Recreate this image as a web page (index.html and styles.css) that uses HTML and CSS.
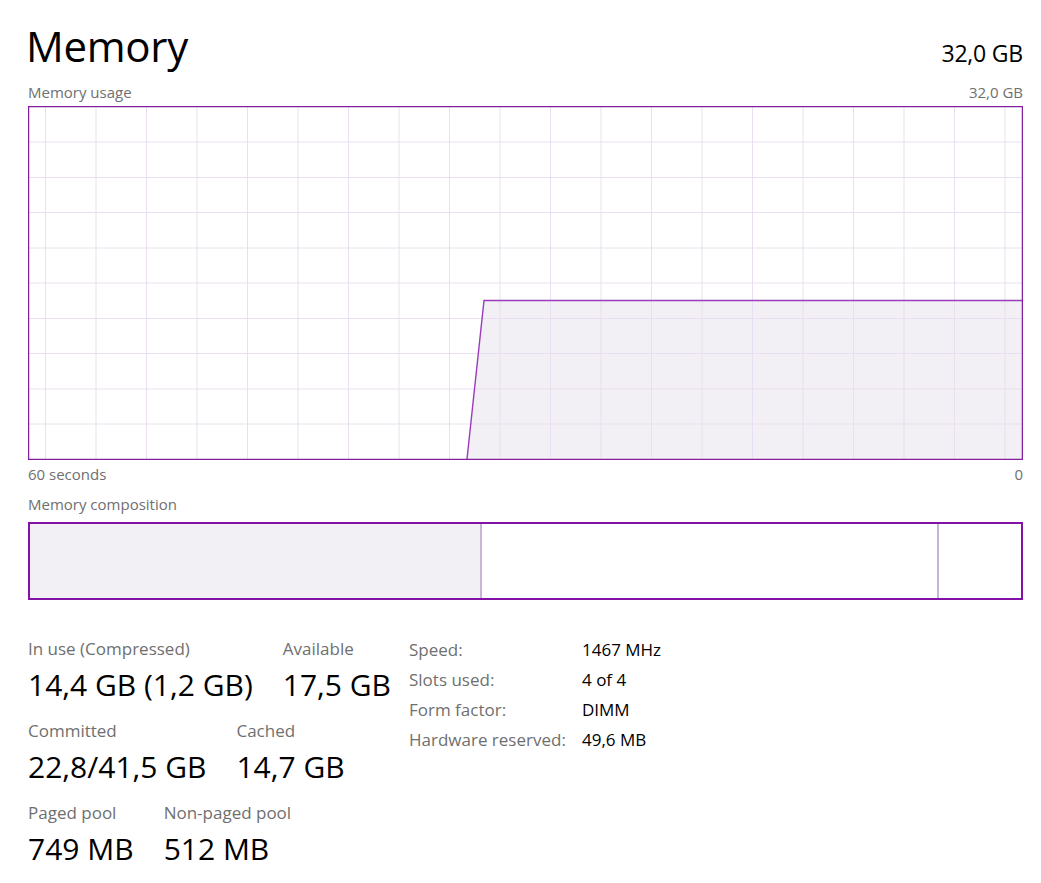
FILE: index.html
```html
<!DOCTYPE html>
<html lang="en">
<head>
<meta charset="utf-8">
<title>Memory</title>
<link rel="stylesheet" href="styles.css">
</head>
<body>
<main class="page">
  <header class="head">
    <h1 class="title">Memory</h1>
    <div class="total">32,0 GB</div>
  </header>

  <div class="caption-row caption-top">
    <span>Memory usage</span>
    <span>32,0 GB</span>
  </div>

  <svg class="chart" width="995" height="354" viewBox="0 0 995 354" xmlns="http://www.w3.org/2000/svg">
    <polygon points="439,353 456,194 994,194 994,353" fill="#f2eff5"/>
    <g stroke="#eadff0" stroke-width="1">
      <line x1="17.5" y1="0" x2="17.5" y2="354"/>
      <line x1="68" y1="0" x2="68" y2="354"/>
      <line x1="118.5" y1="0" x2="118.5" y2="354"/>
      <line x1="169" y1="0" x2="169" y2="354"/>
      <line x1="219.5" y1="0" x2="219.5" y2="354"/>
      <line x1="270" y1="0" x2="270" y2="354"/>
      <line x1="320.5" y1="0" x2="320.5" y2="354"/>
      <line x1="371" y1="0" x2="371" y2="354"/>
      <line x1="421.5" y1="0" x2="421.5" y2="354"/>
      <line x1="472" y1="0" x2="472" y2="354"/>
      <line x1="522.5" y1="0" x2="522.5" y2="354"/>
      <line x1="573" y1="0" x2="573" y2="354"/>
      <line x1="623.5" y1="0" x2="623.5" y2="354"/>
      <line x1="674" y1="0" x2="674" y2="354"/>
      <line x1="724.5" y1="0" x2="724.5" y2="354"/>
      <line x1="775" y1="0" x2="775" y2="354"/>
      <line x1="825.5" y1="0" x2="825.5" y2="354"/>
      <line x1="876" y1="0" x2="876" y2="354"/>
      <line x1="926.5" y1="0" x2="926.5" y2="354"/>
      <line x1="977" y1="0" x2="977" y2="354"/>
      <line x1="0" y1="36" x2="995" y2="36"/>
      <line x1="0" y1="71.5" x2="995" y2="71.5"/>
      <line x1="0" y1="106.5" x2="995" y2="106.5"/>
      <line x1="0" y1="142" x2="995" y2="142"/>
      <line x1="0" y1="177" x2="995" y2="177"/>
      <line x1="0" y1="212.5" x2="995" y2="212.5"/>
      <line x1="0" y1="247.5" x2="995" y2="247.5"/>
      <line x1="0" y1="283" x2="995" y2="283"/>
      <line x1="0" y1="318" x2="995" y2="318"/>
    </g>
    <polyline points="439,353 456,194.5 994,194.5" fill="none" stroke="#9a3cbc" stroke-width="1.4"/>
    <rect x="0.6" y="0.6" width="993.8" height="352.8" fill="none" stroke="#84209f" stroke-width="1.3"/>
  </svg>

  <div class="caption-row caption-axis">
    <span>60 seconds</span>
    <span>0</span>
  </div>

  <div class="caption-row caption-comp">
    <span>Memory composition</span>
  </div>

  <div class="composition">
    <div class="seg seg-used"></div>
    <div class="seg seg-modified"></div>
    <div class="seg seg-free"></div>
  </div>

  <section class="stats">
    <div class="stats-left">
      <div class="stat-row">
        <div class="stat">
          <div class="stat-label">In use (Compressed)</div>
          <div class="stat-value">14,4 GB (1,2 GB)</div>
        </div>
        <div class="stat">
          <div class="stat-label">Available</div>
          <div class="stat-value">17,5 GB</div>
        </div>
      </div>
      <div class="stat-row">
        <div class="stat">
          <div class="stat-label">Committed</div>
          <div class="stat-value">22,8/41,5 GB</div>
        </div>
        <div class="stat">
          <div class="stat-label">Cached</div>
          <div class="stat-value">14,7 GB</div>
        </div>
      </div>
      <div class="stat-row">
        <div class="stat">
          <div class="stat-label">Paged pool</div>
          <div class="stat-value">749 MB</div>
        </div>
        <div class="stat">
          <div class="stat-label">Non-paged pool</div>
          <div class="stat-value">512 MB</div>
        </div>
      </div>
    </div>
    <dl class="props">
      <dt>Speed:</dt><dd>1467 MHz</dd>
      <dt>Slots used:</dt><dd>4 of 4</dd>
      <dt>Form factor:</dt><dd>DIMM</dd>
      <dt>Hardware reserved:</dt><dd>49,6 MB</dd>
    </dl>
  </section>
</main>
</body>
</html>
```

FILE: styles.css
```css
* { box-sizing: border-box; }

html, body {
  margin: 0;
  padding: 0;
  background: #ffffff;
}

body {
  font-family: "Open Sans", "Noto Sans", "Liberation Sans", sans-serif;
  color: #000;
}

.page {
  width: 1041px;
  padding: 18px 18px 0 28px;
}

.head {
  display: flex;
  justify-content: space-between;
  align-items: baseline;
  height: 56px;
}

.title {
  margin: 0 0 0 -2px;
  font-size: 42px;
  font-weight: 400;
  line-height: 56px;
  letter-spacing: -0.3px;
}

.total {
  font-size: 23px;
  line-height: 30px;
  letter-spacing: -0.2px;
}

.caption-row {
  display: flex;
  justify-content: space-between;
  font-size: 15px;
  line-height: 20px;
  color: #6f6f6f;
}

.caption-top { margin-top: 8px; }
.caption-axis { margin-top: 4px; }
.caption-comp { margin-top: 10px; }

.chart {
  display: block;
  margin-top: 4px;
}

.composition {
  margin-top: 8px;
  width: 995px;
  height: 78px;
  border: 2px solid #8212a6;
  display: flex;
}

.seg { height: 100%; }

.seg-used {
  width: 452px;
  background: #f2f0f4;
  border-right: 2px solid #c8b4d5;
}

.seg-modified {
  width: 457px;
  border-right: 2px solid #c8b4d5;
}

.seg-free { flex: 1; }

.stats {
  margin-top: 34px;
  display: grid;
  grid-template-columns: 381px auto;
}

.stats-left {
  display: flex;
  flex-direction: column;
  gap: 10px;
  padding-top: 3px;
}

.stat-row {
  display: flex;
  gap: 30px;
}

.stat-label {
  font-size: 17px;
  line-height: 24px;
  color: #6f6f6f;
}

.stat-value {
  font-size: 30px;
  line-height: 48px;
}

.props {
  margin: 0;
  display: grid;
  grid-template-columns: 173px auto;
  grid-auto-rows: 30px;
  align-items: center;
  font-size: 17px;
}

.props dt {
  color: #6f6f6f;
}

.props dd {
  margin: 0;
  color: #000;
}
```
